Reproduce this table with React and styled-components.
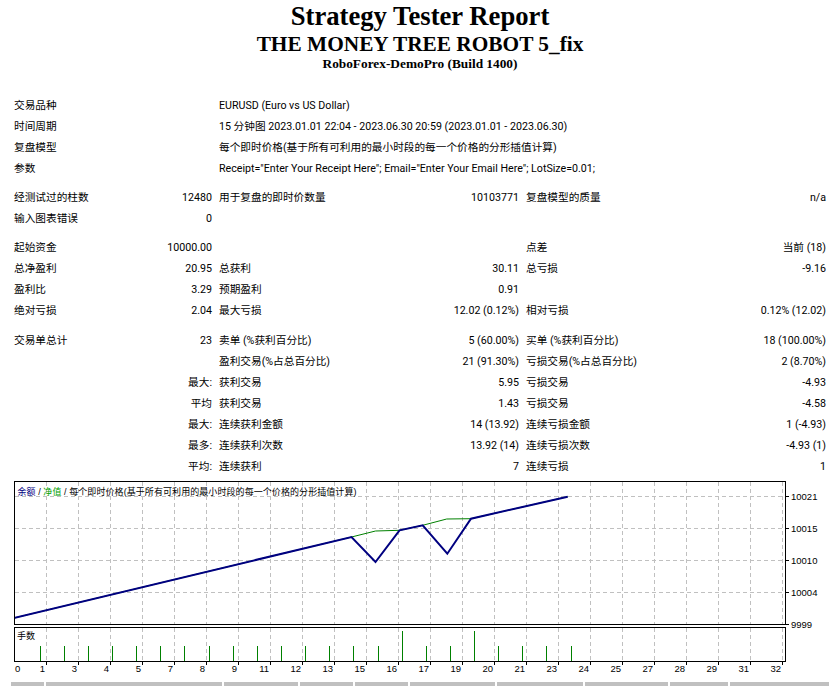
import React from "react";
import styled, { createGlobalStyle } from "styled-components";

const GlobalStyle = createGlobalStyle`
  html, body {
    margin: 0;
    padding: 0;
    background: #ffffff;
    overflow: hidden;
  }
  body {
    font-family: Tahoma, Roboto, "Noto Sans CJK SC", sans-serif;
    color: #000000;
  }
`;

const Page = styled.div`
  width: 840px;
  padding-top: 1px;
`;

const Header = styled.header`
  text-align: center;
  font-family: "Liberation Serif", "Noto Sans CJK SC", serif;
  font-weight: bold;
`;

const HeadLine = styled.div`
  font-size: ${(p) => p.$size}px;
  line-height: 1.15;
`;

const StatsGrid = styled.div`
  display: grid;
  grid-template-columns: 130px 73px 160px 145px 160px 145px;
  column-gap: 1px;
  row-gap: 1px;
  width: 818px;
  margin: 24px 0 0 11px;
  font-family: Tahoma, Roboto, "Noto Sans CJK SC", sans-serif;
  font-size: 10.67px;
`;

const Cell = styled.div`
  grid-column: ${(p) => (p.$span ? `span ${p.$span}` : "auto")};
  height: 20px;
  line-height: 20px;
  padding: 0 3px;
  white-space: nowrap;
  overflow: visible;
  text-align: ${(p) => (p.$right ? "right" : "left")};
`;

const Spacer = styled.div`
  grid-column: 1 / -1;
  height: ${(p) => p.$h}px;
`;

const ChartSvg = styled.svg`
  display: block;
  margin-left: 10px;
  font-family: "Liberation Sans", "Noto Sans CJK SC", sans-serif;
`;

const OrdersHead = styled.div`
  display: grid;
  grid-template-columns: 33px 176px 74px 53px 53px 85px 86px 83px 58px 99px;
  column-gap: 2px;
  width: 818px;
  margin: 5px 0 0 11px;
`;

const HeadCell = styled.div`
  background: #c0c0c0;
  height: 20px;
`;

const infoRows = [
  ["交易品种", "EURUSD (Euro vs US Dollar)"],
  ["时间周期", "15 分钟图 2023.01.01 22:04 - 2023.06.30 20:59 (2023.01.01 - 2023.06.30)"],
  ["复盘模型", "每个即时价格(基于所有可利用的最小时段的每一个价格的分形插值计算)"],
  ["参数", 'Receipt="Enter Your Receipt Here"; Email="Enter Your Email Here"; LotSize=0.01;'],
];

const sixRows = [
  [
    ["经测试过的柱数", "12480", "用于复盘的即时价数量", "10103771", "复盘模型的质量", "n/a"],
    ["输入图表错误", "0", "", "", "", ""],
  ],
  [
    ["起始资金", "10000.00", "", "", "点差", "当前 (18)"],
    ["总净盈利", "20.95", "总获利", "30.11", "总亏损", "-9.16"],
    ["盈利比", "3.29", "预期盈利", "0.91", "", ""],
    ["绝对亏损", "2.04", "最大亏损", "12.02 (0.12%)", "相对亏损", "0.12% (12.02)"],
  ],
  [
    ["交易单总计", "23", "卖单 (%获利百分比)", "5 (60.00%)", "买单 (%获利百分比)", "18 (100.00%)"],
    ["", "", "盈利交易(%占总百分比)", "21 (91.30%)", "亏损交易(%占总百分比)", "2 (8.70%)"],
    ["", "最大:", "获利交易", "5.95", "亏损交易", "-4.93"],
    ["", "平均", "获利交易", "1.43", "亏损交易", "-4.58"],
    ["", "最大:", "连续获利金额", "14 (13.92)", "连续亏损金额", "1 (-4.93)"],
    ["", "最多:", "连续获利次数", "13.92 (14)", "连续亏损次数", "-4.93 (1)"],
    ["", "平均:", "连续获利", "7", "连续亏损", "1"],
  ],
];

function SixRow({ r }) {
  return (
    <>
      <Cell>{r[0]}</Cell>
      <Cell $right>{r[1]}</Cell>
      <Cell>{r[2]}</Cell>
      <Cell $right>{r[3]}</Cell>
      <Cell>{r[4]}</Cell>
      <Cell $right>{r[5]}</Cell>
    </>
  );
}

const gridXs = Array.from({ length: 24 }, (_, k) => 36 + 32 * k);
const xLabels = ["1", "3", "4", "5", "7", "8", "9", "11", "12", "13", "15", "16", "17", "19", "20", "21", "23", "24", "25", "27", "28", "29", "31", "32"];
const hGrid = [
  [19.5, "10021"],
  [51.5, "10015"],
  [83.5, "10010"],
  [115.5, "10004"],
  [147.5, "9999"],
];
const bars = Array.from({ length: 23 }, (_, i) => Math.round(29.7 + 24.13 * i) + 0.5);
const tall = new Set([15, 18]);

const balancePts = "4,141 341.5,60 365.5,85 389.5,53.3 412.7,48.3 437.3,76.7 461,41.7 557.7,19.7";
const equityPts = "4,141 341.5,60 365.5,54 389.5,53.3 412.7,48.3 436.7,42 461,41.7 557.7,19.7";

function Chart() {
  return (
    <ChartSvg width="820" height="200" viewBox="0 0 820 200">
      <defs>
        <clipPath id="mainClip">
          <rect x="5" y="5" width="770" height="142.5" />
        </clipPath>
      </defs>
      {gridXs.map((x) => (
        <line key={"v" + x} x1={x + 0.5} y1="5" x2={x + 0.5} y2="147" stroke="#c0c0c0" strokeDasharray="4 3" />
      ))}
      {hGrid.slice(0, 4).map(([y]) => (
        <line key={"h" + y} x1="5" y1={y} x2="775" y2={y} stroke="#c0c0c0" strokeDasharray="4 3" />
      ))}
      {gridXs.map((x) => (
        <line key={"vv" + x} x1={x + 0.5} y1="151" x2={x + 0.5} y2="184" stroke="#c0c0c0" strokeDasharray="4 3" />
      ))}
      <g clipPath="url(#mainClip)">
        <polyline points={equityPts} fill="none" stroke="#008000" strokeWidth="1" />
        <polyline points={balancePts} fill="none" stroke="#000080" strokeWidth="2" strokeLinejoin="miter" />
      </g>
      <rect x="4.5" y="4.5" width="771" height="143" fill="none" stroke="#000" />
      <rect x="4.5" y="150.5" width="771" height="34" fill="none" stroke="#000" />
      {hGrid.map(([y, t]) => (
        <g key={"yl" + t}>
          <line x1="775.5" y1={y} x2="779" y2={y} stroke="#000" />
          <text x="781" y={y + 3.5} fontSize="9.5" fill="#000">
            {t}
          </text>
        </g>
      ))}
      {gridXs.map((x, i) => (
        <g key={"xl" + x}>
          <line x1={x + 0.5} y1="184.5" x2={x + 0.5} y2="188" stroke="#000" />
          <text x={x - 1} y="195" fontSize="9.5" textAnchor="end" fill="#000">
            {xLabels[i]}
          </text>
        </g>
      ))}
      <text x="5" y="195" fontSize="9.5" fill="#000">
        0
      </text>
      {bars.map((x, i) => (
        <line key={"b" + i} x1={x} y1={tall.has(i) ? 154 : 169} x2={x} y2="184" stroke="#008000" strokeWidth="1" />
      ))}
      <text x="7.5" y="17.5" fontSize="9" textLength="339" lengthAdjust="spacing" fill="#000">
        <tspan fill="#000080">余额</tspan>
        <tspan> / </tspan>
        <tspan fill="#00a000">净值</tspan>
        <tspan> / 每个即时价格(基于所有可利用的最小时段的每一个价格的分形插值计算)</tspan>
      </text>
      <text x="7" y="162" fontSize="9" fill="#000">
        手数
      </text>
    </ChartSvg>
  );
}

const headCells = ["n", "time", "type", "order", "size", "price", "sl", "tp", "profit", "balance"];

export default function App() {
  return (
    <Page>
      <GlobalStyle />
      <Header>
        <HeadLine $size={26.67}>Strategy Tester Report</HeadLine>
        <HeadLine $size={21.33}>THE MONEY TREE ROBOT 5_fix</HeadLine>
        <HeadLine $size={13.33}>RoboForex-DemoPro (Build 1400)</HeadLine>
      </Header>
      <StatsGrid>
        {infoRows.map(([l, v]) => (
          <React.Fragment key={l}>
            <Cell $span={2}>{l}</Cell>
            <Cell $span={4}>{v}</Cell>
          </React.Fragment>
        ))}
        <Spacer $h={7} />
        {sixRows[0].map((r, i) => (
          <SixRow key={"a" + i} r={r} />
        ))}
        <Spacer $h={7} />
        {sixRows[1].map((r, i) => (
          <SixRow key={"b" + i} r={r} />
        ))}
        <Spacer $h={8} />
        {sixRows[2].map((r, i) => (
          <SixRow key={"c" + i} r={r} />
        ))}
      </StatsGrid>
      <Chart />
      <OrdersHead>
        {headCells.map((c) => (
          <HeadCell key={c} />
        ))}
      </OrdersHead>
    </Page>
  );
}
